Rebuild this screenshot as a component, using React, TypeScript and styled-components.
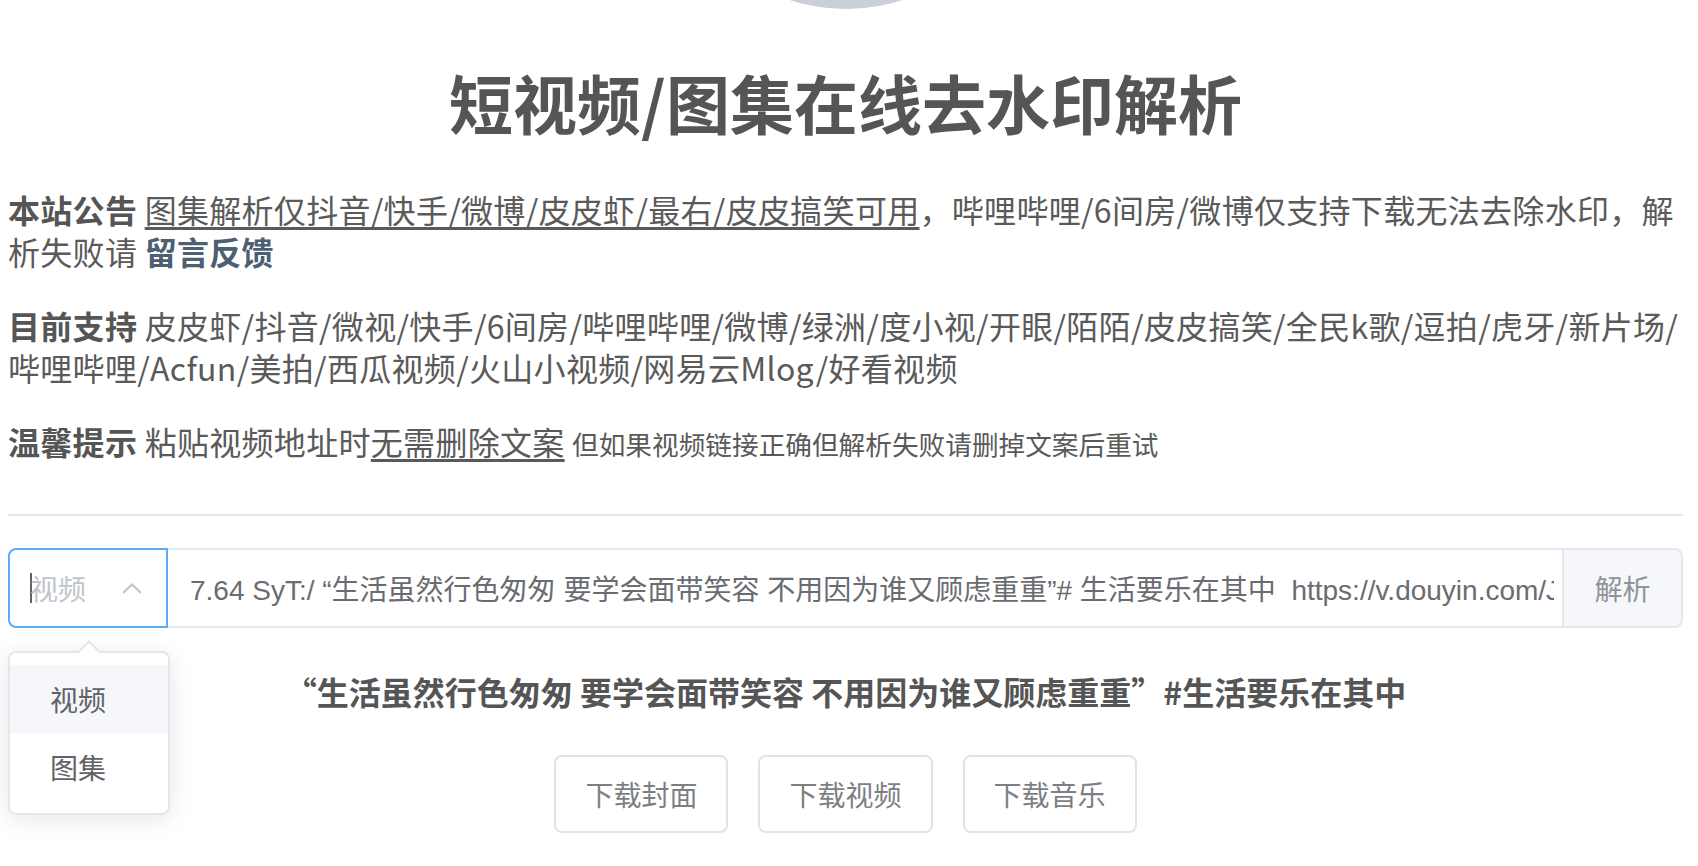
import styled, { createGlobalStyle } from "styled-components"

const GlobalStyle = createGlobalStyle`
	html, body {
		margin: 0;
		padding: 0;
		background: #ffffff;
	}
	body {
		font-family: "Noto Sans CJK SC", "Noto Sans", sans-serif;
		color: #5a5a5a;
	}
`

const inputValue =
	"7.64 SyT:/ “生活虽然行色匆匆 要学会面带笑容 不用因为谁又顾虑重重”# 生活要乐在其中  https://v.douyin.com/JYxk8Lq/ 复制此链接，打开Dou音搜索，直接观看视频！"

const App = () => {
	return (
		<>
			<GlobalStyle />
			<Page>
				<AvatarStrip>
					<Avatar />
				</AvatarStrip>
				<Title>短视频/图集在线去水印解析</Title>

				<Notice>
					<Label>本站公告</Label>{" "}
					<Link href="#">图集解析仅抖音/快手/微博/皮皮虾/最右/皮皮搞笑可用</Link>
					，哔哩哔哩/6间房/微博仅支持下载无法去除水印，解析失败请{" "}
					<Feedback href="#">留言反馈</Feedback>
				</Notice>
				<Notice>
					<Label>目前支持</Label>{" "}
					皮皮虾/抖音/微视/快手/6间房/哔哩哔哩/微博/绿洲/度小视/开眼/陌陌/皮皮搞笑/全民k歌/逗拍/虎牙/新片场/哔哩哔哩/Acfun/美拍/西瓜视频/火山小视频/网易云Mlog/好看视频
				</Notice>
				<Notice>
					<Label>温馨提示</Label> 粘贴视频地址时<Link href="#">无需删除文案</Link>{" "}
					<Small>但如果视频链接正确但解析失败请删掉文案后重试</Small>
				</Notice>

				<Divider />

				<InputGroup>
					<SelectBox>
						<Caret />
						<Placeholder>视频</Placeholder>
						<ArrowIcon viewBox="0 0 20 11" aria-hidden="true">
							<polyline points="1,10 10,1.5 19,10" />
						</ArrowIcon>
						<Dropdown>
							<Option $active>视频</Option>
							<Option>图集</Option>
						</Dropdown>
					</SelectBox>
					<UrlInput readOnly value={inputValue} />
					<ParseButton>解析</ParseButton>
				</InputGroup>

				<Caption>“生活虽然行色匆匆 要学会面带笑容 不用因为谁又顾虑重重”#生活要乐在其中</Caption>

				<ButtonRow>
					<PlainButton>下载封面</PlainButton>
					<PlainButton>下载视频</PlainButton>
					<PlainButton>下载音乐</PlainButton>
				</ButtonRow>
			</Page>
		</>
	)
}

export default App

const Page = styled.div`
	padding: 0 15px 40px 8px;
`

const AvatarStrip = styled.div`
	height: 9px;
	overflow: hidden;
	display: flex;
	justify-content: center;
`

const Avatar = styled.div`
	flex-shrink: 0;
	width: 364px;
	height: 364px;
	margin-top: -355px;
	border-radius: 50%;
	background: #cbcfd8;
`

const Title = styled.h1`
	margin: 54px 0 0;
	font-size: 64px;
	line-height: 77px;
	font-weight: 700;
	text-align: center;
	color: #555555;
`

const Notice = styled.p`
	margin: 48px -7px 0 0;
	font-size: 32px;
	line-height: 42px;
	letter-spacing: 0.3px;
	color: #5a5a5a;

	& + & {
		margin-top: 32px;
	}
`

const Label = styled.strong`
	font-weight: 700;
	color: #555555;
`

const Link = styled.a`
	color: inherit;
	text-decoration: underline;
	text-underline-offset: 4px;
`

const Feedback = styled.a`
	color: #4d5f73;
	font-weight: 700;
	text-decoration: none;
`

const Small = styled.small`
	font-size: 26.67px;
	letter-spacing: 0;
`

const Divider = styled.div`
	height: 2px;
	margin-top: 49px;
	background: #e6e6e6;
`

const InputGroup = styled.div`
	display: flex;
	height: 80px;
	margin-top: 32px;
`

const SelectBox = styled.div`
	position: relative;
	box-sizing: border-box;
	width: 160px;
	flex-shrink: 0;
	display: flex;
	align-items: center;
	padding: 0 24px 0 20px;
	border: 2px solid #5dabf6;
	border-radius: 8px 0 0 8px;
	background: #ffffff;
`

const Caret = styled.span`
	width: 2px;
	height: 30px;
	background: #606266;
	margin-right: -2px;
`

const Placeholder = styled.span`
	flex: 1;
	font-size: 28px;
	line-height: 1;
	color: #c0c4cc;
`

const ArrowIcon = styled.svg`
	width: 20px;
	height: 11px;
	fill: none;
	stroke: #c0c4cc;
	stroke-width: 2;
`

const Dropdown = styled.div`
	position: absolute;
	top: calc(100% + 25px);
	left: -2px;
	z-index: 10;
	box-sizing: border-box;
	width: 162px;
	padding: 12px 0;
	background: #ffffff;
	border: 2px solid #e4e7ed;
	border-radius: 8px;
	box-shadow: 0 4px 24px rgba(0, 0, 0, 0.1);

	&::before,
	&::after {
		content: "";
		position: absolute;
		left: 67px;
		width: 0;
		height: 0;
		border-left: 12px solid transparent;
		border-right: 12px solid transparent;
	}

	&::before {
		top: -13px;
		border-bottom: 12px solid #e4e7ed;
	}

	&::after {
		top: -10px;
		border-bottom: 12px solid #ffffff;
	}
`

const Option = styled.div<{ $active?: boolean }>`
	height: 68px;
	padding: 0 40px;
	display: flex;
	align-items: center;
	font-size: 28px;
	color: #606266;
	background: ${(p) => (p.$active ? "#f5f7fa" : "transparent")};
`

const UrlInput = styled.input`
	flex: 1;
	min-width: 0;
	box-sizing: border-box;
	height: 80px;
	margin: 0;
	padding: 0 8px 0 22px;
	border: 2px solid #e4e7ed;
	border-left: none;
	border-right: none;
	outline: none;
	background: #ffffff;
	font-family: "Liberation Sans", "Noto Sans CJK SC", sans-serif;
	font-size: 28px;
	color: #6a6c71;
`

const ParseButton = styled.button`
	box-sizing: border-box;
	width: 121px;
	height: 80px;
	margin: 0;
	padding: 0;
	border: 2px solid #e4e7ed;
	border-radius: 0 8px 8px 0;
	background: #f5f7fa;
	font-family: "Noto Sans CJK SC", sans-serif;
	font-size: 28px;
	color: #909399;
`

const Caption = styled.h3`
	margin: 39px 0 0;
	font-size: 32px;
	line-height: 48px;
	font-weight: 700;
	text-align: center;
	color: #555555;
`

const ButtonRow = styled.div`
	display: flex;
	justify-content: center;
	gap: 30px;
	margin-top: 40px;
`

const PlainButton = styled.button`
	box-sizing: border-box;
	height: 78px;
	padding: 0 29px;
	border: 2px solid #e2e3e8;
	border-radius: 8px;
	background: #ffffff;
	font-family: "Noto Sans CJK SC", sans-serif;
	font-size: 28px;
	color: #7d7f84;
`
